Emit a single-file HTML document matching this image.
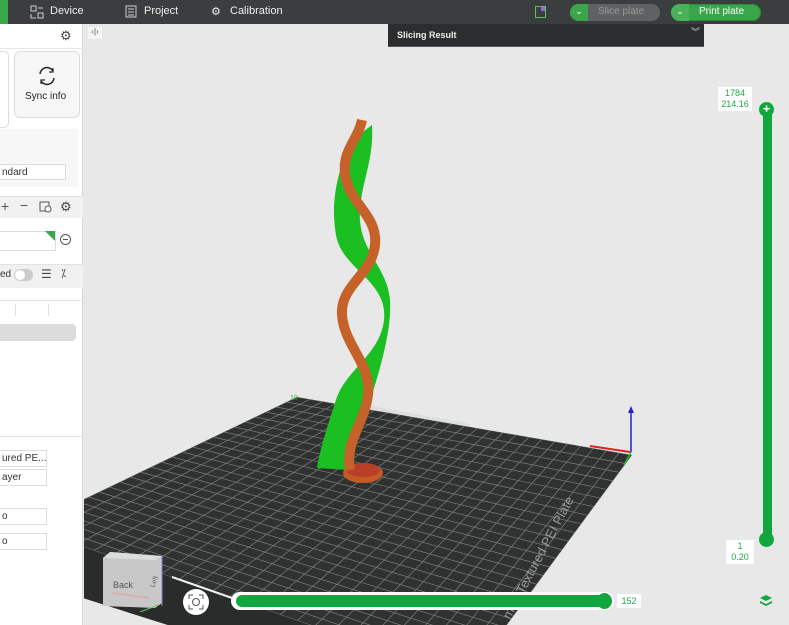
<!DOCTYPE html>
<html><head><meta charset="utf-8"><style>
*{margin:0;padding:0;box-sizing:border-box}
body{width:789px;height:625px;overflow:hidden;background:#e8e8e8;font-family:"Liberation Sans",sans-serif;position:relative}
.top{position:absolute;left:0;top:0;width:789px;height:24px;background:#3a3e3f;color:#eee;font-size:11px}
.top span{position:absolute;top:5px}
.left{position:absolute;left:0;top:24px;width:83px;height:601px;background:#fff;border-right:1px solid #d8d8d8}
.box{position:absolute;background:#fff;border:1px solid #ddd;font-size:10px;color:#333;padding:2px 3px;white-space:nowrap;overflow:hidden}
.g{color:#1fa84a;font-size:9px;text-align:center;line-height:11px}
</style></head><body>
<div class="top">
<div style="position:absolute;left:0;top:0;width:8px;height:24px;background:#3aa64a"></div>
<svg style="position:absolute;left:30px;top:5px" width="14" height="14" fill="none" stroke="#ccc"><rect x="1" y="1" width="5" height="5"/><rect x="8" y="8" width="5" height="5"/><path d="M8 3h5M1 9v4h5"/></svg>
<span style="left:50px">Device</span>
<svg style="position:absolute;left:125px;top:5px" width="12" height="13" fill="none" stroke="#ccc"><rect x="1" y="1" width="10" height="11"/><path d="M3 4h6M3 7h6M3 10h6"/></svg>
<span style="left:144px">Project</span>
<span style="left:211px;top:5px;font-size:11px">⚙</span>
<span style="left:230px">Calibration</span>
<svg style="position:absolute;left:535px;top:6px" width="11" height="12"><rect x="0.5" y="0.5" width="10" height="11" fill="none" stroke="#5bc46a"/><rect x="6" y="1" width="4" height="4" fill="#9a6ad0"/></svg>
<div style="position:absolute;left:570px;top:4px;width:90px;height:17px;border-radius:9px;background:#5f6263"></div>
<div style="position:absolute;left:570px;top:4px;width:18px;height:17px;border-radius:9px 0 0 9px;background:#3aa64a;color:#fff;font-size:9px;text-align:center;line-height:15px">⌄</div>
<span style="left:598px;top:6px;color:#999;font-size:10px">Slice plate</span>
<div style="position:absolute;left:671px;top:4px;width:90px;height:17px;border-radius:9px;background:#3aa64a;border:1px solid #2b8d3b"></div>
<div style="position:absolute;left:671px;top:4px;width:18px;height:17px;border-radius:9px 0 0 9px;background:#49b259;color:#fff;font-size:9px;text-align:center;line-height:15px">⌄</div>
<span style="left:699px;top:6px;color:#fff;font-size:10px">Print plate</span>
</div>

<div class="left">
<span style="position:absolute;left:60px;top:4px;font-size:13px;color:#444">⚙</span>
<div style="position:absolute;left:0;top:24px;width:83px;height:1px;background:#e5e5e5"></div>
<div style="position:absolute;left:-8px;top:27px;width:17px;height:77px;border:1px solid #ddd;border-radius:5px"></div>
<div style="position:absolute;left:14px;top:27px;width:66px;height:67px;border:1px solid #ddd;border-radius:6px;background:#f7f7f7"></div>
<svg style="position:absolute;left:36px;top:41px" width="22" height="22" fill="none" stroke="#222" stroke-width="1.5"><path d="M4 9a7 7 0 0 1 13-3M18 13a7 7 0 0 1-13 3"/><path d="M17 3v4h-4M5 19v-4h4" stroke-width="1.2"/></svg>
<div style="position:absolute;left:25px;top:67px;font-size:10px;color:#222">Sync info</div>
<div style="position:absolute;left:0;top:105px;width:78px;height:58px;background:#f7f7f7"></div>
<div class="box" style="left:-2px;top:140px;width:68px;height:16px">ndard</div>
<div style="position:absolute;left:0;top:172px;width:83px;height:22px;background:#f1f1f1;border-top:1px solid #e2e2e2"></div>
<span style="position:absolute;left:1px;top:174px;font-size:14px;color:#555">+</span>
<span style="position:absolute;left:20px;top:173px;font-size:14px;color:#555">−</span>
<svg style="position:absolute;left:39px;top:177px" width="13" height="12" fill="none" stroke="#555"><rect x="1" y="1" width="9" height="9"/><circle cx="9" cy="8" r="3" fill="#fff"/></svg>
<span style="position:absolute;left:60px;top:175px;font-size:13px;color:#444">⚙</span>
<div class="box" style="left:-2px;top:207px;width:58px;height:20px"></div>
<div style="position:absolute;left:45px;top:207px;width:0;height:0;border-left:10px solid transparent;border-top:10px solid #3aa64a"></div>
<div style="position:absolute;left:60px;top:210px;width:11px;height:11px;border:1.2px solid #555;border-radius:50%"></div>
<div style="position:absolute;left:63px;top:215px;width:5px;height:1px;background:#555"></div>
<div style="position:absolute;left:0;top:240px;width:83px;height:24px;background:#f1f1f1;border-top:1px solid #e2e2e2"></div>
<span style="position:absolute;left:0;top:245px;font-size:10px;color:#333">ed</span>
<div style="position:absolute;left:14px;top:245px;width:19px;height:12px;border-radius:6px;background:#ccc"></div>
<div style="position:absolute;left:15px;top:246px;width:10px;height:10px;border-radius:50%;background:#fff"></div>
<span style="position:absolute;left:41px;top:243px;font-size:12px;color:#444">☰</span>
<span style="position:absolute;left:61px;top:243px;font-size:11px;color:#444">⁒</span>
<div style="position:absolute;left:0;top:276px;width:81px;height:1px;background:#e2e2e2"></div>
<div style="position:absolute;left:15px;top:280px;width:1px;height:12px;background:#e2e2e2"></div>
<div style="position:absolute;left:48px;top:280px;width:1px;height:12px;background:#e2e2e2"></div>
<div style="position:absolute;left:0;top:300px;width:76px;height:17px;background:#dcdcdc;border-radius:0 4px 4px 0"></div>
<div style="position:absolute;left:0;top:412px;width:83px;height:1px;background:#e2e2e2"></div>
<div class="box" style="left:-2px;top:426px;width:49px;height:17px">ured PE...</div>
<div class="box" style="left:-2px;top:445px;width:49px;height:17px">ayer</div>
<div class="box" style="left:-2px;top:484px;width:49px;height:17px">o</div>
<div class="box" style="left:-2px;top:509px;width:49px;height:17px">o</div>
</div>

<div style="position:absolute;left:84px;top:24px;width:705px;height:601px;overflow:hidden">
<svg width="705" height="601">
<g transform="translate(-84,-24)">
<defs><clipPath id="c"><polygon points="297,397 632,455 467,679 26,527"/></clipPath></defs>
<polygon points="26,527 467,679 467,720 26,580" fill="#2a2b2b"/>
<polygon points="297,397 632,455 467,679 26,527" fill="#303131"/>
<g id="grid" clip-path="url(#c)" stroke="#7c7e7e" stroke-width="0.7"></g>
<line x1="172" y1="577" x2="232" y2="598" stroke="#eee" stroke-width="2"/>
<line x1="345" y1="403" x2="470" y2="425" stroke="#ddd" stroke-width="3"/>
<text x="0" y="0" transform="translate(510,620) rotate(-62)" fill="#9a9a9a" font-size="13">mbu Textured PEI Plate</text>
<line x1="630" y1="452" x2="590" y2="446" stroke="#d22" stroke-width="2"/>
<line x1="631" y1="452" x2="631" y2="412" stroke="#22c" stroke-width="1.5"/>
<polygon points="628,413 634,413 631,406" fill="#22c"/>
<line x1="631" y1="452" x2="624" y2="465" stroke="#2b2" stroke-width="1.5"/>
<text x="290" y="400" fill="#2b2" font-size="7">10</text>
<path d="M352 140 C338 170 330 200 336 235 C342 270 388 280 384 320 C380 355 345 370 336 400 C326 430 320 450 317 468 L348 470 C352 440 366 420 372 395 C380 368 392 330 390 300 C387 265 357 250 360 210 C362 180 374 160 372 125 Z" fill="#1bbf21"/>
<ellipse cx="363" cy="473" rx="20" ry="10" fill="#c45a24"/>
<ellipse cx="363" cy="470" rx="17" ry="7" fill="#b8402a"/>
<path d="M362 120 C358 140 342 150 345 175 C350 205 378 215 375 245 C372 275 340 285 342 315 C344 345 372 365 368 395 C364 425 345 440 350 470" fill="none" stroke="#c4622a" stroke-width="10"/>
</g>
</svg>
</div>
<script>
(function(){var g=document.getElementById('grid'),A=[297,397],B=[632,455],C=[467,679],D=[26,527],s='';
function L(p,q,t){return [p[0]+(q[0]-p[0])*t,p[1]+(q[1]-p[1])*t]}
for(var i=0;i<=26;i++){var t=i/26,p=L(A,B,t),q=L(D,C,t);s+='<line x1="'+p[0]+'" y1="'+p[1]+'" x2="'+q[0]+'" y2="'+q[1]+'"/>';}
for(var j=0;j<=26;j++){var t=j/26,p=L(A,D,t),q=L(B,C,t);s+='<line x1="'+p[0]+'" y1="'+p[1]+'" x2="'+q[0]+'" y2="'+q[1]+'"/>';}
g.innerHTML=s;})();
</script>

<div style="position:absolute;left:88px;top:27px;width:14px;height:12px;background:#f5f5f5;font-size:8px;color:#555;text-align:center">‹|›</div>
<div style="position:absolute;left:388px;top:24px;width:316px;height:23px;background:#2c2d2e;border-bottom:1px solid #555"></div>
<div style="position:absolute;left:397px;top:30px;color:#eee;font-size:9px;font-weight:bold">Slicing Result</div>
<div style="position:absolute;left:691px;top:25px;color:#ccc;font-size:9px">︾</div>

<div style="position:absolute;left:763px;top:108px;width:9px;height:432px;background:#10a83e"></div>
<div style="position:absolute;left:759px;top:102px;width:15px;height:15px;border-radius:50%;background:#10a83e;color:#fff;font-size:13px;line-height:14px;text-align:center;font-weight:bold">+</div>
<div style="position:absolute;left:759px;top:532px;width:15px;height:15px;border-radius:50%;background:#10a83e"></div>
<div class="g" style="position:absolute;left:718px;top:87px;width:34px;height:24px;background:#fff;padding-top:1px">1784<br>214.16</div>
<div class="g" style="position:absolute;left:726px;top:540px;width:28px;height:24px;background:#fff;padding-top:1px">1<br>0.20</div>
<div style="position:absolute;left:231px;top:592px;width:383px;height:18px;border-radius:9px;background:#fff"></div>
<div style="position:absolute;left:236px;top:595px;width:370px;height:12px;border-radius:6px;background:#10a83e"></div>
<div style="position:absolute;left:597px;top:593px;width:15px;height:16px;border-radius:50%;background:#10a83e"></div>
<div class="g" style="position:absolute;left:617px;top:594px;width:24px;height:14px;background:#fff;line-height:14px">152</div>
<div style="position:absolute;left:183px;top:589px;width:26px;height:26px;border-radius:50%;background:#fff"></div>
<svg style="position:absolute;left:188px;top:594px" width="16" height="16" fill="none" stroke="#555"><path d="M1 5V1h4M11 1h4v4M15 11v4h-4M5 15H1v-4"/><circle cx="8" cy="8" r="3.5"/></svg>
<svg style="position:absolute;left:100px;top:548px" width="70" height="64"><polygon points="3,10 10,4 62,8 62,55 55,60 3,58" fill="#c8c8c8"/><polygon points="3,10 10,4 62,8 55,12" fill="#dcdcdc"/><line x1="62" y1="8" x2="62" y2="58" stroke="#8a7fd0"/><line x1="12" y1="45" x2="50" y2="50" stroke="#e99"/><line x1="58" y1="57" x2="40" y2="64" stroke="#6c6"/><text x="13" y="40" font-size="9" fill="#555" font-family="Liberation Sans">Back</text><text x="50" y="40" font-size="7" fill="#666" transform="rotate(-70 52 37)">Left</text></svg>
<svg style="position:absolute;left:759px;top:594px" width="14" height="14" fill="#10a83e"><path d="M7 1l6 3-6 3-6-3z"/><path d="M1 7l6 3 6-3v2l-6 3-6-3z"/></svg>
</body></html>
